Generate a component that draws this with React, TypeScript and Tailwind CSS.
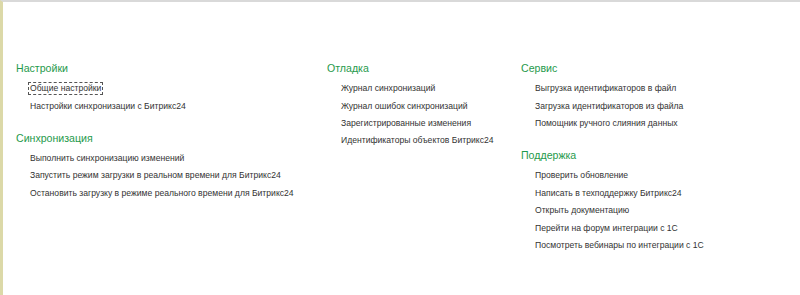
import React from "react";

const Header = ({ children, className = "" }: { children: React.ReactNode; className?: string }) => (
  <div className={"text-[10.6px] leading-[16px] text-[#1f9a4c] h-[16px] " + className}>{children}</div>
);

const Item = ({ children, focused = false }: { children: React.ReactNode; focused?: boolean }) => (
  <div className="h-[17.4px] flex items-center pl-[12px]">
    <span
      className={
        "text-[8.6px] leading-[11px] text-[#333333] whitespace-nowrap px-[1px] border " +
        (focused ? "border-dashed border-[#555]" : "border-transparent")
      }
    >
      {children}
    </span>
  </div>
);

const Section = ({ title, items, className = "", focusedIndex = -1 }: { title: string; items: string[]; className?: string; focusedIndex?: number }) => (
  <div className={"flex flex-col " + className}>
    <Header>{title}</Header>
    <div className="flex flex-col mt-[4px]">
      {items.map((t, i) => (
        <Item key={i} focused={i === focusedIndex}>
          {t}
        </Item>
      ))}
    </div>
  </div>
);

export default function App() {
  return (
    <div
      className="w-[800px] h-[295px] bg-white border-t-2 border-t-[#d9d9d9] border-l-[3px] border-l-[#dcd9a8] overflow-hidden"
      style={{ fontFamily: '"Liberation Sans", Arial, sans-serif' }}
    >
      <div className="flex pt-[58px] pl-[13px]">
        <div className="w-[311px] flex flex-col">
          <Section title="Настройки" items={["Общие настройки", "Настройки синхронизации с Битрикс24"]} focusedIndex={0} />
          <Section
            className="mt-[15px]"
            title="Синхронизация"
            items={[
              "Выполнить синхронизацию изменений",
              "Запустить режим загрузки в реальном времени для Битрикс24",
              "Остановить загрузку в режиме реального времени для Битрикс24",
            ]}
          />
        </div>
        <div className="w-[194px] flex flex-col">
          <Section
            title="Отладка"
            items={[
              "Журнал синхронизаций",
              "Журнал ошибок синхронизаций",
              "Зарегистрированные изменения",
              "Идентификаторы объектов Битрикс24",
            ]}
          />
        </div>
        <div className="flex flex-col">
          <Section
            title="Сервис"
            items={[
              "Выгрузка идентификаторов в файл",
              "Загрузка идентификаторов из файла",
              "Помощник ручного слияния данных",
            ]}
          />
          <Section
            className="mt-[15px]"
            title="Поддержка"
            items={[
              "Проверить обновление",
              "Написать в техподдержку Битрикс24",
              "Открыть документацию",
              "Перейти на форум интеграции с 1С",
              "Посмотреть вебинары по интеграции с 1С",
            ]}
          />
        </div>
      </div>
    </div>
  );
}
